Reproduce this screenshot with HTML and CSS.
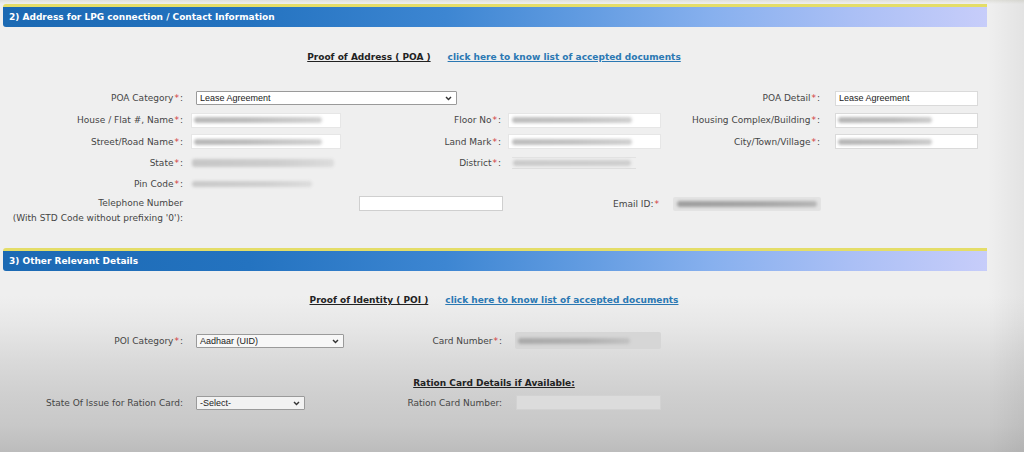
FILE: index.html
```html
<!DOCTYPE html>
<html>
<head>
<meta charset="utf-8">
<title>LPG Connection Form</title>
<link rel="stylesheet" href="styles.css">
</head>
<body>
<div class="page">
  <div class="sec-head first">2) Address for LPG connection / Contact Information</div>
  <div class="proof p1"><span class="proof-title">Proof of Address ( POA )</span><a class="doc-link" href="#">click here to know list of accepted documents</a></div>

  <div class="form-grid g1">
    <label class="lbl c1">POA Category<em>*</em>:</label>
    <span class="sel c23 sel-poa"><span class="sel-text">Lease Agreement</span><svg class="chev" width="7" height="5" viewBox="0 0 7 5"><path d="M1 1 L3.5 3.6 L6 1" fill="none" stroke="#333" stroke-width="1.4"/></svg></span>
    <label class="lbl c5">POA Detail<em>*</em>:</label>
    <span class="inp c6 inp-r"><span class="inp-text">Lease Agreement</span></span>

    <label class="lbl c1">House / Flat #, Name<em>*</em>:</label>
    <span class="inp c2 inp-l"><span class="blur bw-a"></span></span>
    <label class="lbl c3">Floor No<em>*</em>:</label>
    <span class="inp c4 inp-m"><span class="blur bw-b"></span></span>
    <label class="lbl c5">Housing Complex/Building<em>*</em>:</label>
    <span class="inp c6 inp-r"><span class="blur bw-c"></span></span>

    <label class="lbl c1">Street/Road Name<em>*</em>:</label>
    <span class="inp c2 inp-l"><span class="blur bw-a"></span></span>
    <label class="lbl c3">Land Mark<em>*</em>:</label>
    <span class="inp c4 inp-m"><span class="blur bw-b"></span></span>
    <label class="lbl c5">City/Town/Village<em>*</em>:</label>
    <span class="inp c6 inp-r"><span class="blur bw-c"></span></span>

    <label class="lbl c1">State<em>*</em>:</label>
    <span class="plain c2"><span class="blur bw-state"></span></span>
    <label class="lbl c3">District<em>*</em>:</label>
    <span class="plain c4 plain-lined"><span class="blur bw-dist"></span></span>

    <label class="lbl c1">Pin Code<em>*</em>:</label>
    <span class="plain c2"><span class="blur bw-pin"></span></span>
  </div>

  <div class="tel-row">
    <label class="tel-lbl">Telephone Number<br>(With STD Code without prefixing '0'):</label>
    <span class="inp tel-inp"></span>
    <label class="lbl email-lbl">Email ID:<em>*</em></label>
    <span class="email-box"><span class="blur bw-email"></span></span>
  </div>

  <div class="sec-head second">3) Other Relevant Details</div>
  <div class="proof p2"><span class="proof-title">Proof of Identity ( POI )</span><a class="doc-link" href="#">click here to know list of accepted documents</a></div>

  <div class="form-grid g2">
    <label class="lbl c1">POI Category<em>*</em>:</label>
    <span class="sel c2 sel-poi"><span class="sel-text">Aadhaar (UID)</span><svg class="chev" width="7" height="5" viewBox="0 0 7 5"><path d="M1 1 L3.5 3.6 L6 1" fill="none" stroke="#333" stroke-width="1.4"/></svg></span>
    <label class="lbl c3 lbl-c3b">Card Number<em>*</em>:</label>
    <span class="card-box c4"><span class="blur bw-card"></span></span>
  </div>

  <div class="rc-head"><span>Ration Card Details if Available:</span></div>

  <div class="form-grid g3">
    <label class="lbl c1">State Of Issue for Ration Card:</label>
    <span class="sel c2 sel-state"><span class="sel-text">-Select-</span><svg class="chev" width="7" height="5" viewBox="0 0 7 5"><path d="M1 1 L3.5 3.6 L6 1" fill="none" stroke="#333" stroke-width="1.4"/></svg></span>
    <label class="lbl c3 lbl-c3b">Ration Card Number:</label>
    <span class="inp-dis c4"></span>
  </div>
</div>
</body>
</html>
```

FILE: styles.css
```css
html, body {
  margin: 0;
  padding: 0;
}
body {
  width: 1024px;
  height: 452px;
  overflow: hidden;
  font-family: "DejaVu Sans", Verdana, sans-serif;
  font-size: 9px;
  color: #454545;
  background:
    linear-gradient(to right, rgba(0,0,0,0) 0, rgba(0,0,0,0) 988px, rgba(0,0,0,0.05) 1024px),
    linear-gradient(to bottom, #e0e0da 0, #efefef 4px, #efefef 296px, #e7e7e7 325px, #dadada 360px, #cfcfcf 395px, #c8c8c8 425px, #bcbcbc 452px);
}
.page {
  width: 991px;
}

/* section headers */
.sec-head {
  box-sizing: border-box;
  width: 984px;
  height: 23px;
  margin-left: 3px;
  padding-left: 6px;
  border-top: 3px solid #e4dd68;
  border-radius: 3px 0 0 3px;
  background: linear-gradient(to right, #1b69b3 0%, #2473c0 25%, #3d86d2 45%, #5f9ae0 58%, #87b0ee 72%, #aabff5 86%, #c7cdfa 100%);
  color: #fff;
  font-weight: bold;
  font-size: 9px;
  line-height: 20px;
  white-space: nowrap;
}
.sec-head.first { margin-top: 4px; }
.sec-head.second { margin-top: 22.5px; }

/* proof heading rows */
.proof {
  display: flex;
  justify-content: center;
  gap: 17px;
  width: 988px;
  line-height: 16px;
  font-weight: bold;
  white-space: nowrap;
}
.proof.p1 { padding-top: 22px; }
.proof.p2 { padding-top: 21px; }
.proof-title {
  color: #222;
  text-decoration: underline;
}
.doc-link {
  color: #2b78b3;
  text-decoration: underline;
}

/* grid forms */
.form-grid {
  display: grid;
  grid-template-columns: 188px 157px 163px 157px 163px 163px;
  grid-auto-rows: 21.5px;
  align-items: center;
}
.g1 {
  margin-top: 22px;
  grid-template-rows: 22px 22px 21.5px 21px 21px;
}
.g2 { margin-top: 22px; }
.g3 { margin-top: 1px; }

.c1 { grid-column: 1; }
.c2 { grid-column: 2; }
.c23 { grid-column: 2 / span 2; }
.c3 { grid-column: 3; }
.c4 { grid-column: 4; }
.c5 { grid-column: 5; }
.c6 { grid-column: 6; }

.lbl {
  text-align: right;
  white-space: nowrap;
  line-height: 14px;
}
.lbl em {
  font-style: normal;
  color: #d23c3c;
  padding: 0 1px;
}
.c1.lbl { padding-right: 5px; }
.c3.lbl { padding-right: 7px; }
.c3.lbl-c3b { padding-right: 6px; }
.c5.lbl { padding-right: 8px; }

/* fields */
.inp {
  display: flex;
  align-items: center;
  box-sizing: border-box;
  height: 15px;
  background: #fff;
  border: 1px solid #e6e6e6;
}
.inp-l { margin-left: 3px; width: 150px; }
.inp-m { width: 153px; }
.inp-r { margin-left: 7px; width: 143px; border-color: #dadada; }
.inp-text {
  font-family: "Liberation Sans", Arial, sans-serif;
  font-size: 9px;
  color: #222;
  padding-left: 3px;
}

.sel {
  position: relative;
  display: flex;
  align-items: center;
  box-sizing: border-box;
  height: 14px;
  margin-left: 8px;
  background: #fff;
  border: 1px solid #9a9a9a;
  border-radius: 1px;
}
.sel-text {
  font-family: "Liberation Sans", Arial, sans-serif;
  font-size: 9px;
  color: #222;
  padding-left: 3px;
}
.chev {
  position: absolute;
  right: 4px;
  top: 4px;
}
.sel-poa { width: 261px; }
.sel-poi { width: 148px; background: #f7f7f7; }
.sel-state { width: 109px; background: #f2f2f2; }

.plain {
  display: flex;
  align-items: center;
  height: 12px;
}
.plain-lined {
  box-sizing: border-box;
  width: 124px;
  margin-left: 4px;
  border-top: 1px solid #e2e2e2;
  border-bottom: 1px solid #dedede;
}

.blur {
  display: block;
  height: 6px;
  border-radius: 3px;
  filter: blur(1.4px);
}
.bw-a { width: 128px; margin-left: 2px; background: linear-gradient(to right, #b8b8b8 0, #bcbcbc 40%, #d2d2d2 100%); }
.bw-b { width: 120px; margin-left: 3px; background: linear-gradient(to right, #bdbdbd 0, #c2c2c2 50%, #d0d0d0 100%); }
.bw-c { width: 94px; margin-left: 2px; background: linear-gradient(to right, #b6b6b6 0, #bcbcbc 60%, #cdcdcd 100%); }
.bw-state { width: 142px; margin-left: 4px; height: 8px; background: linear-gradient(to right, #c6c6c6 0, #cdcdcd 60%, #dcdcdc 100%); }
.bw-dist { width: 118px; margin-left: 1px; background: linear-gradient(to right, #c9c9c9 0, #cecece 100%); }
.bw-pin { width: 120px; margin-left: 4px; background: linear-gradient(to right, #c8c8c8 0, #cfcfcf 60%, #dcdcdc 100%); }

/* telephone / email row */
.tel-row {
  display: flex;
  align-items: flex-start;
  margin-top: 1px;
}
.tel-lbl {
  box-sizing: border-box;
  width: 188px;
  padding-right: 5px;
  text-align: right;
  line-height: 15px;
  white-space: nowrap;
}
.tel-inp {
  margin-left: 171px;
  margin-top: 0.5px;
  width: 144px;
  border-color: #cfcfcf;
}
.email-lbl {
  margin-left: 110px;
  margin-top: 1.5px;
}
.email-box {
  display: flex;
  align-items: center;
  box-sizing: border-box;
  margin-left: 13px;
  margin-top: 1.5px;
  width: 148px;
  height: 14px;
  background: #e3e3e3;
  border-radius: 2px;
}
.bw-email { width: 140px; margin-left: 4px; background: linear-gradient(to right, #9e9e9e 0, #a6a6a6 60%, #b6b6b6 100%); }

/* section 3 */
.card-box {
  display: flex;
  align-items: center;
  box-sizing: border-box;
  margin-left: 7px;
  width: 146px;
  height: 17px;
  background: #d6d6d6;
  border-radius: 2px;
}
.bw-card { width: 112px; margin-left: 3px; background: linear-gradient(to right, #a9a9a9 0, #b0b0b0 60%, #c2c2c2 100%); }

.rc-head {
  display: flex;
  justify-content: center;
  width: 988px;
  margin-top: 23.5px;
  line-height: 16px;
  font-weight: bold;
  color: #222;
}
.rc-head span { text-decoration: underline; }

.inp-dis {
  box-sizing: border-box;
  margin-left: 8px;
  width: 145px;
  height: 15px;
  background: #dcdcdc;
  border: 1px solid #d2d2d2;
}
```
